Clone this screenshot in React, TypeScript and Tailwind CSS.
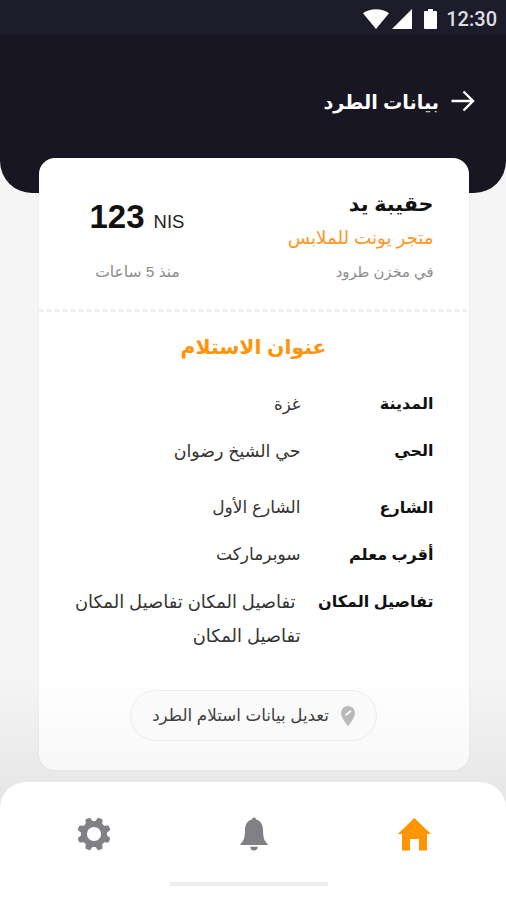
import type { ReactNode } from "react";
import clsx from "clsx";

type Detail = {
  label: string;
  lines: string[];
  rowClass: string;
  valueClass: string;
};

const details: Detail[] = [
  { label: "المدينة", lines: ["غزة"], rowClass: "h-[47px]", valueClass: "text-[16.5px]" },
  { label: "الحي", lines: ["حي الشيخ رضوان"], rowClass: "h-[57px]", valueClass: "text-[17.4px]" },
  { label: "الشارع", lines: ["الشارع الأول"], rowClass: "h-[47px]", valueClass: "text-[17px]" },
  { label: "أقرب معلم", lines: ["سوبرماركت"], rowClass: "h-[47px]", valueClass: "text-[17px]" },
  {
    label: "تفاصيل المكان",
    lines: ["تفاصيل المكان تفاصيل المكان", "تفاصيل المكان"],
    rowClass: "h-[105px]",
    valueClass: "text-[17.9px] first:pr-[5px]",
  },
];

const gearTeeth = [22.5, 67.5, 112.5, 157.5, 202.5, 247.5, 292.5, 337.5];

function Text({ className, children }: { className?: string; children: ReactNode }) {
  return <span className={clsx("block whitespace-nowrap", className)}>{children}</span>;
}

function StatusBar() {
  return (
    <div dir="ltr" className="flex h-[34px] items-center justify-end bg-[#1c1c2b] pr-[9px] text-white">
      <svg viewBox="0 0 26 20" className="mt-1 h-5 w-[26px]" fill="currentColor">
        <path d="M0 4.3C7-1.1 19-1.1 26 4.3L13 20Z" />
      </svg>
      <svg viewBox="0 0 20 20" className="ml-[3px] mt-1 size-5" fill="currentColor">
        <path d="M20 0V20H0Z" />
      </svg>
      <svg viewBox="0 0 13 20" className="ml-3 mt-1 h-5 w-[13px]" fill="currentColor">
        <path d="M4 0h5v2h3a1 1 0 0 1 1 1v16a1 1 0 0 1-1 1H1a1 1 0 0 1-1-1V3a1 1 0 0 1 1-1h3Z" />
      </svg>
      <span className="ml-[9px] mt-1 font-[Roboto] text-[20px] font-medium leading-5 text-[#dedee2]">12:30</span>
    </div>
  );
}

function Header() {
  return (
    <header className="h-[193px] overflow-hidden rounded-b-[32px] bg-[#171622]">
      <StatusBar />
      <div className="mt-[51px] flex h-8 items-center gap-[12px] pr-[31px] text-white">
        <svg viewBox="0 0 24 22" className="h-[22px] w-6" fill="none" stroke="currentColor" strokeWidth="2.4">
          <path d="M0.5 11H22M12.5 1.5L22 11L12.5 20.5" />
        </svg>
        <Text className="pt-[4px] text-[19.2px] font-bold">بيانات الطرد</Text>
      </div>
    </header>
  );
}

function Summary() {
  return (
    <div className="flex h-[151px] justify-between pl-[51px] pr-[35px] pt-[28px]">
      <div>
        <Text className="h-9 text-[20.7px] font-bold leading-9">حقيبة يد</Text>
        <Text className="h-8 text-[18.2px] leading-8 text-[#ff941f]">متجر يونت للملابس</Text>
        <Text className="h-9 text-[14.8px] leading-9 text-[#8b8b8b]">في مخزن طرود</Text>
      </div>
      <div className="w-[96px]">
        <div dir="ltr" className="mt-[13px] flex h-9 items-baseline gap-[9px] leading-9">
          <span className="text-[33px] font-bold">123</span>
          <span className="text-[18.5px] text-[#222]">NIS</span>
        </div>
        <div className="mt-[19px] flex justify-center">
          <Text className="h-9 text-[15.5px] leading-9 text-[#8b8b8b]">منذ 5 ساعات</Text>
        </div>
      </div>
    </div>
  );
}

function DetailRow({ label, lines, rowClass, valueClass }: Detail) {
  return (
    <div className={clsx("flex", rowClass)}>
      <Text className="w-[133px] shrink-0 text-[16px] font-bold leading-[34px]">{label}</Text>
      <div>
        {lines.map((line) => (
          <Text key={line} className={clsx("h-[34px] leading-[34px] text-[#333]", valueClass)}>
            {line}
          </Text>
        ))}
      </div>
    </div>
  );
}

function EditButton() {
  return (
    <button className="mx-auto flex h-[51px] w-[247px] items-center gap-3 rounded-full border border-[#ececec] bg-[#fafafa] pr-[21px]">
      <svg viewBox="0 0 14 20" className="h-5 w-[14px] shrink-0">
        <path d="M7 0a7 7 0 0 1 7 7c0 5-7 13-7 13S0 12 0 7a7 7 0 0 1 7-7Z" fill="#b9b9b9" />
        <path d="M4 10l.5-2 4.8-4 1.3 1.4L6 9.5Z" fill="#f7f7f7" />
      </svg>
      <Text className="text-[16.7px] text-[#404040]">تعديل بيانات استلام الطرد</Text>
    </button>
  );
}

function GearIcon() {
  return (
    <svg viewBox="-17 -17 34 34" className="size-[34px]" fill="#808185">
      <circle r="10.1" fill="none" stroke="#808185" strokeWidth="6" />
      {gearTeeth.map((angle) => (
        <path
          key={angle}
          d="M-4.4-11.5Q-3.2-12.6-2.9-15.4Q-2.6-16.8-1.4-16.8H1.4Q2.6-16.8 2.9-15.4Q3.2-12.6 4.4-11.5Z"
          transform={`rotate(${angle})`}
        />
      ))}
    </svg>
  );
}

function BottomNav() {
  return (
    <nav dir="ltr" className="mt-auto h-[118px] rounded-t-[26px] bg-white">
      <div className="flex items-center justify-between pl-[77px] pr-[75px] pt-[35px]">
        <GearIcon />
        <svg viewBox="0 0 28 34" className="h-[34px] w-7" fill="#808185">
          <path d="M14 .5a2 2 0 0 1 2 2.1C20.5 3.6 22.8 7.5 23 12.5C23.2 20 23.8 24 27.5 26.5V28H.5v-1.5C4.2 24 4.8 20 5 12.5C5.2 7.5 7.5 3.6 12 2.6a2 2 0 0 1 2-2.1ZM10.3 29.8h7.4a3.7 3.7 0 0 1-7.4 0Z" />
        </svg>
        <svg viewBox="0 0 34 34" className="size-[34px]" fill="#ff9500">
          <path d="M17.3 1L34 17H30V33.5H22V22H13V33.5H5V17H.8Z" />
        </svg>
      </div>
      <div className="ml-[170px] mt-[31px] h-1 w-[158px] bg-[#eeeef0]" />
    </nav>
  );
}

export default function App() {
  return (
    <div
      dir="rtl"
      className="flex h-[900px] w-[506px] flex-col overflow-hidden bg-linear-to-b from-[#f5f5f5] from-75% to-[#e7e7e7] to-88% font-['Liberation_Sans','DejaVu_Sans',sans-serif] text-[#111]"
    >
      <Header />
      <main className="mr-[37.5px] mt-[-35px] h-[612px] w-[430px] rounded-2xl bg-linear-to-b from-white from-84% to-[#f8f8f8] shadow-[0_0_2px_rgba(0,0,0,0.08)]">
        <Summary />
        <div className="h-[3px] bg-[repeating-linear-gradient(to_right,#f0f0f0_0_4px,transparent_4px_8px)]" />
        <h1 className="mt-[17px] text-center text-[20.4px] font-bold leading-9 text-[#ff9408]">عنوان الاستلام</h1>
        <div className="pr-[35px] pt-[22px]">
          {details.map((detail) => (
            <DetailRow key={detail.label} {...detail} />
          ))}
        </div>
        <EditButton />
      </main>
      <BottomNav />
    </div>
  );
}
